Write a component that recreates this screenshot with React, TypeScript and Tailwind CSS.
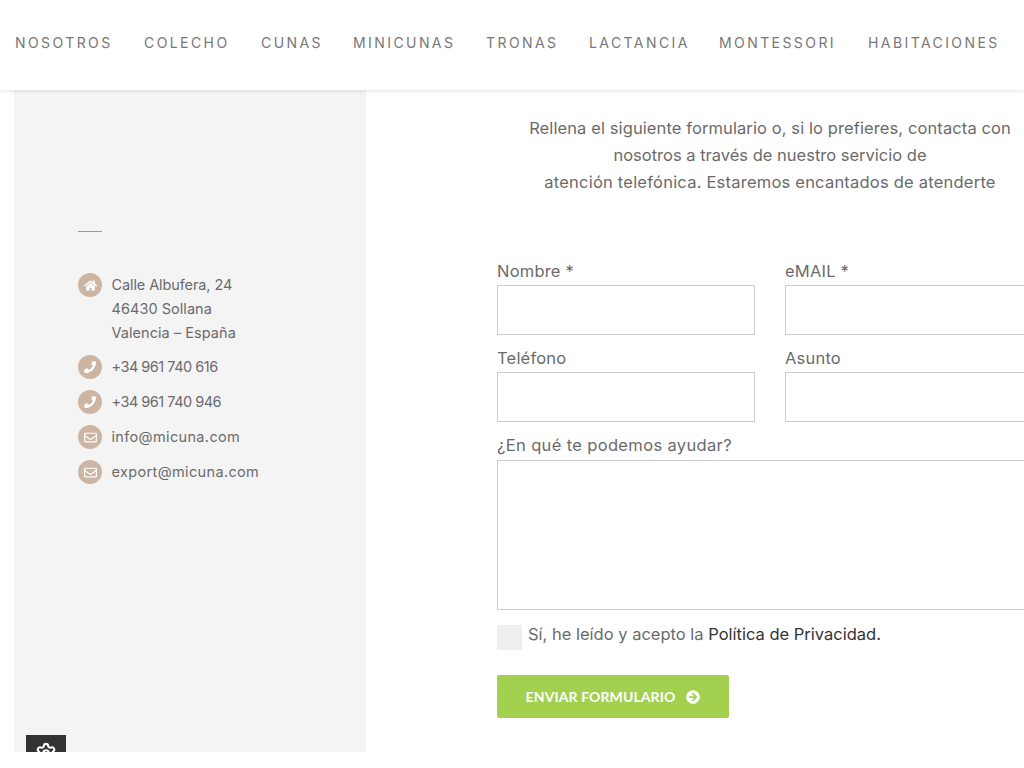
import { Settings } from "lucide-react";
import { FaHome, FaPhoneAlt, FaRegEnvelope, FaArrowCircleRight } from "react-icons/fa";
import type { ReactNode } from "react";

const nav = [
  ["NOSOTROS", "w-[98px]"],
  ["COLECHO", "w-[86px]"],
  ["CUNAS", "w-[61px]"],
  ["MINICUNAS", "w-[102px]"],
  ["TRONAS", "w-[72px]"],
  ["LACTANCIA", "w-[99px]"],
  ["MONTESSORI", "w-[118px]"],
  ["HABITACIONES", "w-[133px]"],
];

function Badge({ children }: { children: ReactNode }) {
  return (
    <span className="flex h-6 w-6 shrink-0 items-center justify-center rounded-full bg-[#cdb5a3] text-white">
      {children}
    </span>
  );
}

function Field({ label, className }: { label: string; className: string }) {
  return (
    <div className={className}>
      <div className="h-[27px] pt-[1px] text-[16.5px] leading-[24px] tracking-[0.2px] text-[#6b6b6b]">{label}</div>
      <div className="h-[50px] border border-[#ccc] bg-white" />
    </div>
  );
}

export default function App() {
  return (
    <div className="relative h-[768px] w-[1024px] overflow-hidden bg-white font-['Inter','Liberation_Sans',sans-serif]">
      <header className="relative z-10 flex h-[90px] items-center gap-[31px] bg-white pb-[5px] pl-[15px] shadow-[0_1px_4px_rgba(0,0,0,0.12)]">
        {nav.map(([n, w]) => (
          <span key={n} className={`${w} shrink-0 whitespace-nowrap text-[14px] tracking-[2.42px] text-[#777]`}>
            {n}
          </span>
        ))}
      </header>
      <div className="flex h-[662px] pl-[14px]">
        <aside className="relative h-full w-[352px] shrink-0 overflow-hidden bg-[#f4f4f4] pl-[64px] pt-[141px]">
          <div className="h-px w-6 bg-[#6fa8dc]" />
          <ul className="mt-[41px] text-[14.5px] leading-[24px] text-[#6b6b6b]">
            <li className="flex gap-[9.5px]">
              <Badge><FaHome size={13} /></Badge>
              <div>
                <div className="tracking-[-0.1px]">Calle Albufera, 24</div>
                <div className="tracking-[0.05px]">46430 Sollana</div>
                <div className="tracking-[0.05px]">Valencia – España</div>
              </div>
            </li>
            <li className="mt-[10px] flex gap-[9.5px]">
              <Badge><FaPhoneAlt size={12} className="-scale-x-100" /></Badge>
              <div className="tracking-[-0.5px]">+34 961 740 616</div>
            </li>
            <li className="mt-[11px] flex gap-[9.5px]">
              <Badge><FaPhoneAlt size={12} className="-scale-x-100" /></Badge>
              <div className="tracking-[-0.5px]">+34 961 740 946</div>
            </li>
            <li className="mt-[11px] flex gap-[9.5px]">
              <Badge><FaRegEnvelope size={13} /></Badge>
              <div className="tracking-[0.35px]">info@micuna.com</div>
            </li>
            <li className="mt-[11px] flex gap-[9.5px]">
              <Badge><FaRegEnvelope size={13} /></Badge>
              <div className="tracking-[0.35px]">export@micuna.com</div>
            </li>
          </ul>
          <div className="absolute left-[12px] top-[645px] flex h-10 w-10 items-start justify-center bg-[#333] pt-[7px] text-white">
            <Settings size={22} strokeWidth={2.25} />
          </div>
        </aside>
        <main className="box-content w-[546px] shrink-0 pl-[131px]">
          <p className="w-[546px] pt-[25px] text-center text-[16.5px] leading-[27px] text-[#6b6b6b]">
            <span className="tracking-[0.1px]">Rellena el siguiente formulario o, si lo prefieres, contacta con</span>
            <br />
            nosotros a través de nuestro servicio de
            <br />
            <span className="tracking-[0.22px]">atención telefónica. Estaremos encantados de atenderte</span>
          </p>
          <div className="mt-[62px] flex w-[546px] flex-wrap gap-x-[30px] gap-y-[10px]">
            <Field label="Nombre *" className="w-[258px]" />
            <Field label="eMAIL *" className="w-[258px]" />
            <Field label="Teléfono" className="w-[258px]" />
            <Field label="Asunto" className="w-[258px]" />
          </div>
          <div className="mt-[10px] w-[546px]">
            <div className="h-[28px] pt-[1px] text-[16.5px] leading-[24px] tracking-[0.35px] text-[#6b6b6b]">¿En qué te podemos ayudar?</div>
            <div className="h-[150px] border border-[#ccc] bg-white" />
          </div>
          <div className="mt-[15px] flex items-start gap-[6px]">
            <span className="h-[25px] w-[25px] bg-[#eee]" />
            <span className="-mt-[1px] text-[16.5px] leading-[20px] text-[#6b6b6b]">
              Sí, he leído y acepto la <span className="text-[#333]">Política de Privacidad.</span>
            </span>
          </div>
          <button className="mt-[25px] flex h-[43px] w-[232px] items-center justify-center gap-[11px] rounded-[2px] bg-[#a2d04f] font-['Lato','Liberation_Sans',sans-serif] text-[14px] font-bold tracking-[0.1px] text-white">
            ENVIAR FORMULARIO
            <FaArrowCircleRight size={14} />
          </button>
        </main>
      </div>
    </div>
  );
}
